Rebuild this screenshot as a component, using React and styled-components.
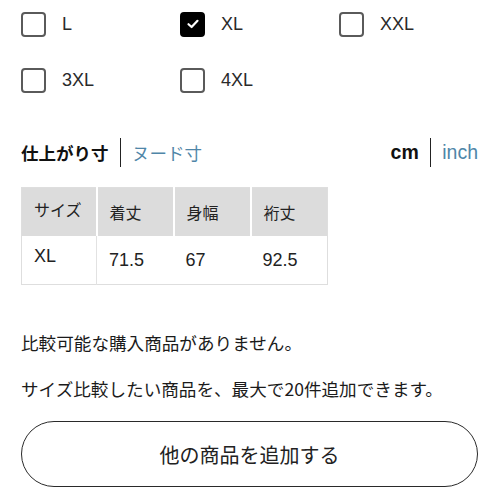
import React, { useState } from "react";
import styled, { createGlobalStyle } from "styled-components";

const GlobalStyle = createGlobalStyle`
  html, body {
    margin: 0;
    padding: 0;
    background: #fff;
  }
  body {
    font-family: "Liberation Sans", "Noto Sans CJK JP", sans-serif;
    color: #1b1b1b;
  }
`;

const sizes = ["L", "XL", "XXL", "3XL", "4XL"];

const App = () => {
  const [checked, setChecked] = useState(["XL"]);
  const [mode, setMode] = useState("finish");
  const [unit, setUnit] = useState("cm");

  function toggle(size) {
    if (checked.includes(size)) {
      setChecked(checked.filter((s) => s !== size));
    } else {
      setChecked([...checked, size]);
    }
  }

  return (
    <Wrapper>
      <GlobalStyle />
      <SizeGrid>
        {sizes.map((size) => (
          <SizeOption key={size} onClick={() => toggle(size)}>
            <Box $on={checked.includes(size)}>
              {checked.includes(size) && (
                <svg width="14" height="14" viewBox="0 0 14 14">
                  <path
                    d="M2.5 7.2 L5.6 10 L11.5 3.8"
                    fill="none"
                    stroke="#fff"
                    strokeWidth="2.2"
                    strokeLinecap="round"
                    strokeLinejoin="round"
                  />
                </svg>
              )}
            </Box>
            <span>{size}</span>
          </SizeOption>
        ))}
      </SizeGrid>

      <ToggleBar>
        <Switch>
          <SwitchItem $on={mode === "finish"} onClick={() => setMode("finish")}>
            仕上がり寸
          </SwitchItem>
          <Divider />
          <SwitchItem $on={mode === "nude"} onClick={() => setMode("nude")}>
            ヌード寸
          </SwitchItem>
        </Switch>
        <Switch>
          <SwitchItem $latin $on={unit === "cm"} onClick={() => setUnit("cm")}>
            cm
          </SwitchItem>
          <Divider />
          <SwitchItem $latin $on={unit === "inch"} onClick={() => setUnit("inch")}>
            inch
          </SwitchItem>
        </Switch>
      </ToggleBar>

      <Table>
        <colgroup>
          <col style={{ width: 75 }} />
          <col style={{ width: 77 }} />
          <col style={{ width: 77 }} />
          <col style={{ width: 77 }} />
        </colgroup>
        <thead>
          <tr>
            <Th $first>サイズ</Th>
            <Th>着丈</Th>
            <Th>身幅</Th>
            <Th>裄丈</Th>
          </tr>
        </thead>
        <tbody>
          <tr>
            <Td $first>XL</Td>
            <Td>71.5</Td>
            <Td>67</Td>
            <Td>92.5</Td>
          </tr>
        </tbody>
      </Table>

      <Note>比較可能な購入商品がありません。</Note>
      <Note>サイズ比較したい商品を、最大で20件追加できます。</Note>

      <AddButton>他の商品を追加する</AddButton>
    </Wrapper>
  );
};

export default App;

const Wrapper = styled.div`
  width: 457px;
  padding: 12px 0 0 21px;
`;

const SizeGrid = styled.div`
  display: grid;
  grid-template-columns: repeat(3, 159px);
  row-gap: 32px;
`;

const SizeOption = styled.label`
  display: flex;
  align-items: center;
  gap: 16px;
  height: 24px;
  font-size: 18px;
  color: #2a2a2a;
  cursor: pointer;
`;

const Box = styled.span`
  box-sizing: border-box;
  width: 25px;
  height: 25px;
  border-radius: 4px;
  border: 2px solid ${(p) => (p.$on ? "#000" : "#5a5a5a")};
  background: ${(p) => (p.$on ? "#000" : "#fff")};
  display: flex;
  align-items: center;
  justify-content: center;
`;

const ToggleBar = styled.div`
  display: flex;
  justify-content: space-between;
  align-items: center;
  margin-top: 45px;
  height: 31px;
`;

const Switch = styled.div`
  display: flex;
  align-items: center;
  gap: 11px;
`;

const SwitchItem = styled.span`
  font-family: ${(p) =>
    p.$latin
      ? `"Liberation Sans", "Noto Sans CJK JP", sans-serif`
      : `"Noto Sans CJK JP", sans-serif`};
  font-size: ${(p) => (p.$latin ? "19.5px" : "17.5px")};
  font-weight: ${(p) => (p.$on ? 700 : 400)};
  color: ${(p) => (p.$on ? "#111" : "#4f86a8")};
  cursor: pointer;
`;

const Divider = styled.span`
  width: 1.5px;
  height: 29px;
  background: #222;
`;

const Table = styled.table`
  margin-top: 19px;
  width: 307px;
  border-collapse: collapse;
  border: 1px solid #dedede;
  table-layout: fixed;
`;

const Th = styled.th`
  box-sizing: border-box;
  height: 48px;
  padding: ${(p) => (p.$first ? "0 0 5px 12px" : "0 0 0 12px")};
  background: #dcdcdc;
  border-left: ${(p) => (p.$first ? "none" : "2px solid #fff")};
  text-align: left;
  font-family: "Noto Sans CJK JP", sans-serif;
  font-size: 16px;
  line-height: 20px;
  font-weight: 400;
  color: #222;
`;

const Td = styled.td`
  box-sizing: border-box;
  height: 49px;
  padding: ${(p) => (p.$first ? "0 0 7px 12px" : "0 0 0 12px")};
  border-right: ${(p) => (p.$first ? "1px solid #e2e2e2" : "none")};
  font-size: 18px;
  line-height: 20px;
  color: #222;
`;

const Note = styled.p`
  margin: 0;
  font-family: "Noto Sans CJK JP", sans-serif;
  font-size: 17.6px;
  line-height: 24px;
  color: #1b1b1b;
  &:first-of-type {
    margin-top: 46px;
  }
  & + & {
    margin-top: 22px;
  }
`;

const AddButton = styled.button`
  display: block;
  box-sizing: border-box;
  margin-top: 20px;
  width: 457px;
  height: 66px;
  border: 1.5px solid #2a2a2a;
  border-radius: 33px;
  background: #fff;
  font-family: "Noto Sans CJK JP", sans-serif;
  font-size: 20px;
  color: #222;
  cursor: pointer;
`;
